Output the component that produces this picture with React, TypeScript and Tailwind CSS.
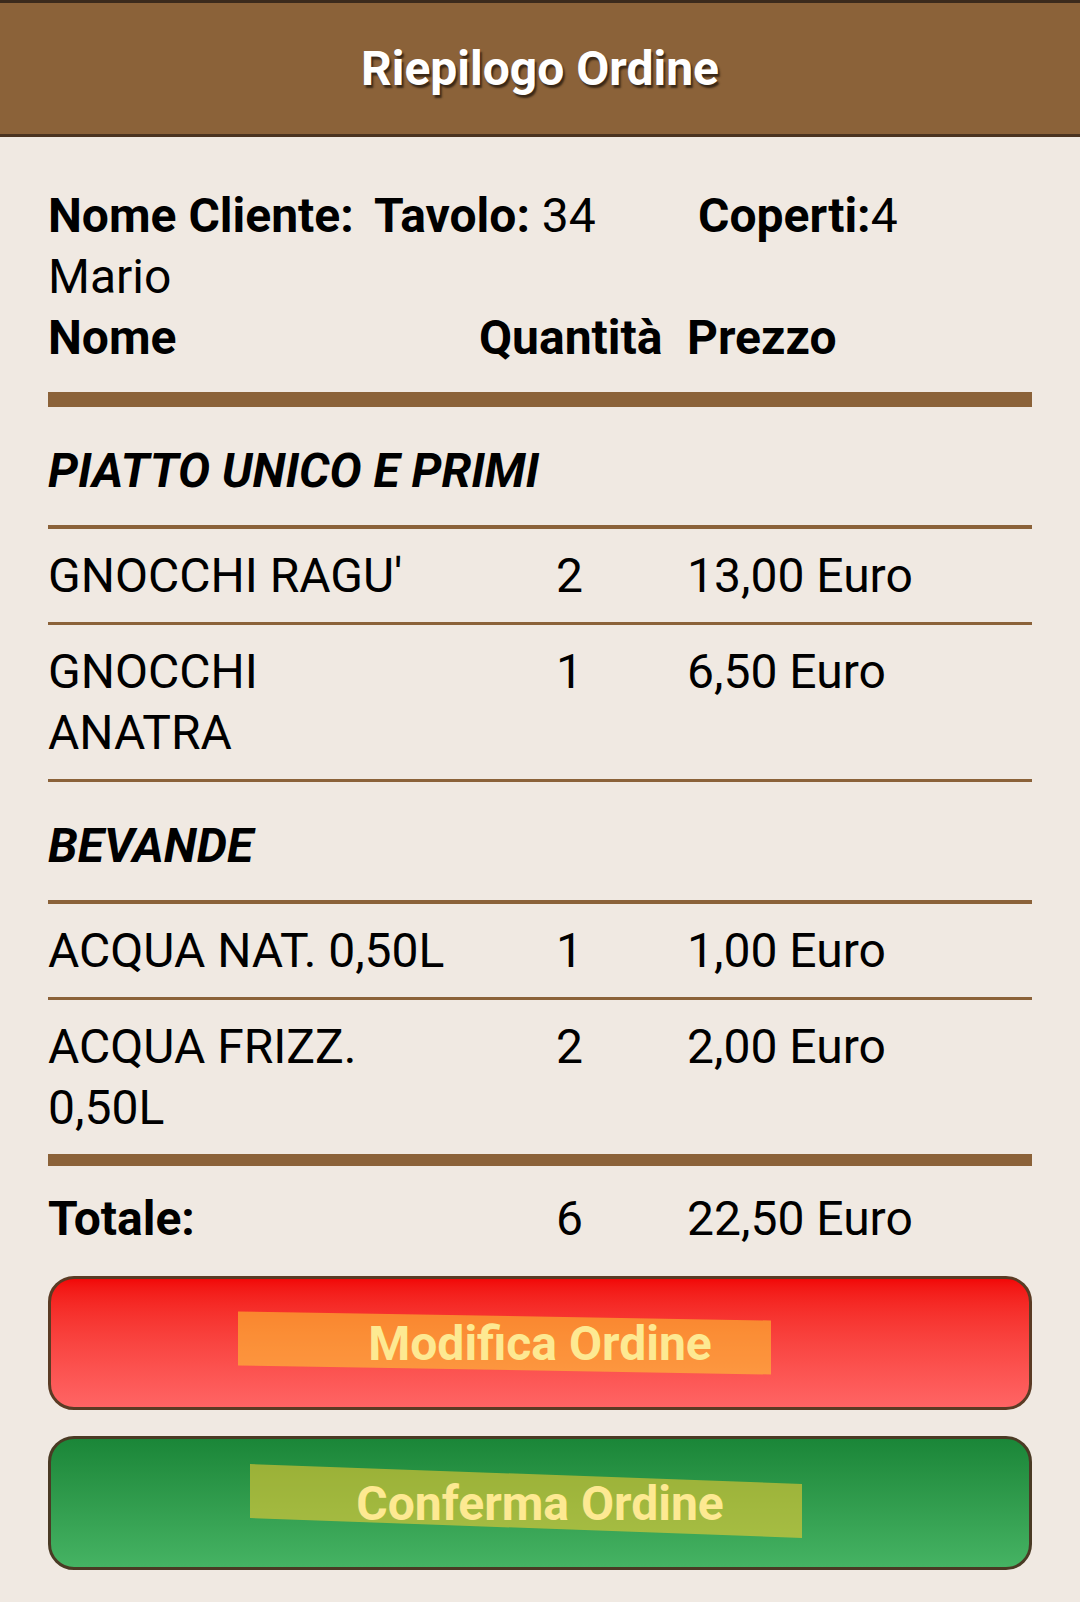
type Item = {
  lines: string[];
  qty: number;
  price: string;
};

type Category = {
  title: string;
  items: Item[];
};

const categories: Category[] = [
  {
    title: "PIATTO UNICO E PRIMI",
    items: [
      { lines: ["GNOCCHI RAGU'"], qty: 2, price: "13,00 Euro" },
      { lines: ["GNOCCHI", "ANATRA"], qty: 1, price: "6,50 Euro" },
    ],
  },
  {
    title: "BEVANDE",
    items: [
      { lines: ["ACQUA NAT. 0,50L"], qty: 1, price: "1,00 Euro" },
      { lines: ["ACQUA FRIZZ.", "0,50L"], qty: 2, price: "2,00 Euro" },
    ],
  },
];

const App = () => {
  return (
    <div className="min-h-[1602px] w-[1080px] bg-[#f0e9e2] font-['Roboto','Liberation_Sans',sans-serif] text-[48px] leading-[61px] text-black">
      {/* header */}
      <div className="h-[137px] flex items-center justify-center bg-[#8b6239] border-t-[3px] border-b-[3px] border-t-[#3b2a1c] border-b-[#4a3320]">
        <h1 className="font-bold text-white [text-shadow:2px_3px_2px_#3a2817]">Riepilogo Ordine</h1>
      </div>

      <div className="px-[48px] pt-[48px]">
        {/* info cliente */}
        <div className="grid grid-cols-[326px_324px_1fr]">
          <div>
            <div className="font-bold">Nome Cliente:</div>
            <div>Mario</div>
          </div>
          <div>
            <span className="font-bold">Tavolo:</span> 34
          </div>
          <div>
            <span className="font-bold">Coperti:</span>4
          </div>
        </div>

        {/* intestazione tabella */}
        <div className="grid grid-cols-[431px_181px_1fr] font-bold pb-[24px] border-b-[15px] border-[#8b6239]">
          <div>Nome</div>
          <div className="text-center">Quantità</div>
          <div className="pl-[27px]">Prezzo</div>
        </div>

        {categories.map((cat, ci) => (
          <div key={ci}>
            <div className="pt-[33px] pb-[24px] border-b-[4px] border-[#8b6239] font-bold italic">{cat.title}</div>
            {cat.items.map((item, ii) => (
              <div
                key={ii}
                className={`grid grid-cols-[431px_181px_1fr] py-[16px] ${
                  ci === categories.length - 1 && ii === cat.items.length - 1
                    ? "border-b-[12px] border-[#8b6239]"
                    : "border-b-[3px] border-[#8b6239]"
                }`}
              >
                <div>
                  {item.lines.map((l, li) => (
                    <div key={li}>{l}</div>
                  ))}
                </div>
                <div className="text-center">{item.qty}</div>
                <div className="pl-[27px]">{item.price}</div>
              </div>
            ))}
          </div>
        ))}

        {/* totale */}
        <div className="grid grid-cols-[431px_181px_1fr] pt-[22px]">
          <div className="font-bold">Totale:</div>
          <div className="text-center">6</div>
          <div className="pl-[27px]">22,50 Euro</div>
        </div>

        {/* bottoni */}
        <div className="flex flex-col gap-[26px] pt-[27px]">
          <button className="relative h-[134px] w-full flex items-center justify-center rounded-[26px] border-[3px] border-[#5a3b24] bg-gradient-to-b from-[#f20707] to-[#ff6464]">
            <span className="absolute left-[187px] top-1/2 -mt-[27px] h-[54px] w-[533px] bg-[rgba(254,205,50,0.55)] [transform:skewY(0.97deg)]" />
            <span className="relative font-bold text-[#fde992]">Modifica Ordine</span>
          </button>
          <button className="relative h-[134px] w-full flex items-center justify-center rounded-[26px] border-[3px] border-[#4a3a24] bg-gradient-to-b from-[#1a8638] to-[#45b363]">
            <span className="absolute left-[199px] top-1/2 -mt-[29px] h-[54px] w-[552px] bg-[rgba(254,205,50,0.55)] [transform:skewY(2.07deg)]" />
            <span className="relative font-bold text-[#fde992]">Conferma Ordine</span>
          </button>
        </div>
      </div>
    </div>
  );
};

export default App;
